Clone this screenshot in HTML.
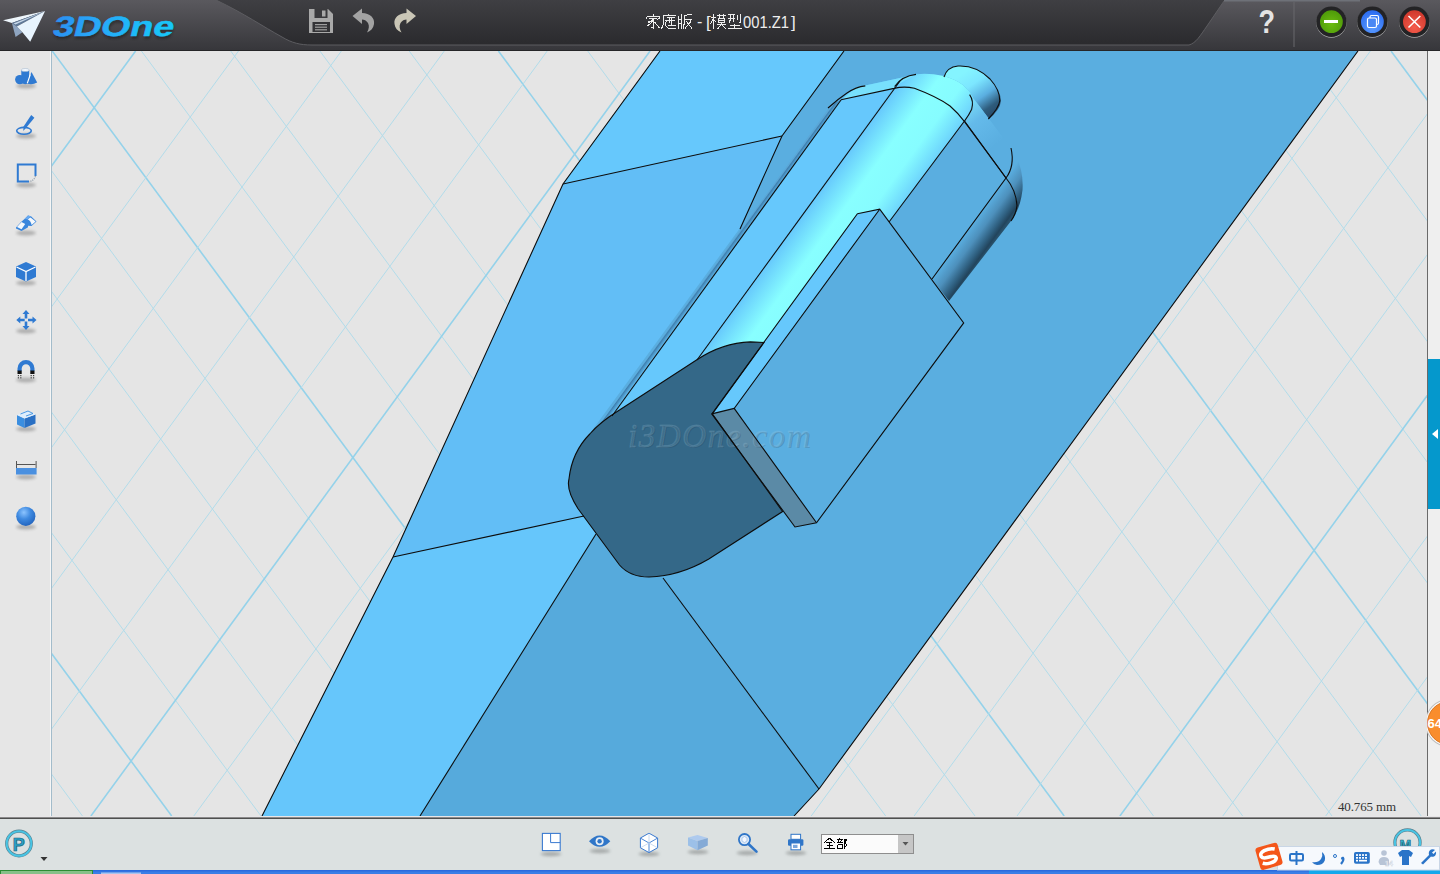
<!DOCTYPE html>
<html><head><meta charset="utf-8">
<style>
html,body{margin:0;padding:0;width:1440px;height:874px;overflow:hidden;background:#dce1e1;font-family:"Liberation Sans",sans-serif;}
svg{position:absolute;left:0;top:0;display:block;}
</style></head><body>
<svg width="1440" height="874" viewBox="0 0 1440 874">
<defs>
<clipPath id="vp"><rect x="52" y="51" width="1375" height="765"/></clipPath>
<linearGradient id="gEdge" gradientUnits="userSpaceOnUse" x1="660.8" y1="340" x2="664.9" y2="343"><stop offset="0" stop-color="#5aa6d6"/><stop offset="0.2" stop-color="#3f80b0"/><stop offset="1" stop-color="#64c0f4"/></linearGradient>
<linearGradient id="gCyl" gradientUnits="userSpaceOnUse" x1="791" y1="230" x2="852.3" y2="274.7"><stop offset="0" stop-color="#66c8fc"/><stop offset="0.4" stop-color="#88ffff"/><stop offset="0.7" stop-color="#86fcff"/><stop offset="1" stop-color="#6cd2fc"/></linearGradient>
<linearGradient id="gCap" gradientUnits="userSpaceOnUse" x1="966" y1="96" x2="1002" y2="140"><stop offset="0" stop-color="#80e8fc"/><stop offset="0.45" stop-color="#64baea"/><stop offset="1" stop-color="#5aaee0"/></linearGradient>
<linearGradient id="gRnd" gradientUnits="userSpaceOnUse" x1="953" y1="250" x2="975.7" y2="266.6"><stop offset="0" stop-color="#5aaee0"/><stop offset="0.4" stop-color="#4d90bc"/><stop offset="0.75" stop-color="#2e5e7e"/><stop offset="0.92" stop-color="#22445c"/><stop offset="1" stop-color="#28506a"/></linearGradient>
<linearGradient id="gNub" gradientUnits="userSpaceOnUse" x1="962" y1="74" x2="990" y2="114"><stop offset="0" stop-color="#84f4ff"/><stop offset="0.3" stop-color="#7ce6ff"/><stop offset="0.62" stop-color="#5aaee0"/><stop offset="0.88" stop-color="#2e5c7c"/><stop offset="1" stop-color="#2a5070"/></linearGradient>
</defs>
<rect x="52" y="51" width="1375" height="765" fill="#e5e5e5"/>
<g clip-path="url(#vp)" id="grid">
<line x1="-1018.8" y1="51" x2="-453.0" y2="816" stroke="#b2dcea" stroke-width="1"/>
<line x1="-929.5" y1="51" x2="-363.8" y2="816" stroke="#b2dcea" stroke-width="1"/>
<line x1="-840.3" y1="51" x2="-274.5" y2="816" stroke="#94d2ea" stroke-width="1.6"/>
<line x1="-751.0" y1="51" x2="-185.3" y2="816" stroke="#b2dcea" stroke-width="1"/>
<line x1="-661.8" y1="51" x2="-96.0" y2="816" stroke="#b2dcea" stroke-width="1"/>
<line x1="-572.5" y1="51" x2="-6.8" y2="816" stroke="#b2dcea" stroke-width="1"/>
<line x1="-483.3" y1="51" x2="82.5" y2="816" stroke="#b2dcea" stroke-width="1"/>
<line x1="-394.1" y1="51" x2="171.7" y2="816" stroke="#94d2ea" stroke-width="1.6"/>
<line x1="-304.8" y1="51" x2="261.0" y2="816" stroke="#b2dcea" stroke-width="1"/>
<line x1="-215.6" y1="51" x2="350.2" y2="816" stroke="#b2dcea" stroke-width="1"/>
<line x1="-126.3" y1="51" x2="439.5" y2="816" stroke="#b2dcea" stroke-width="1"/>
<line x1="-37.0" y1="51" x2="528.7" y2="816" stroke="#b2dcea" stroke-width="1"/>
<line x1="52.2" y1="51" x2="618.0" y2="816" stroke="#94d2ea" stroke-width="1.6"/>
<line x1="141.4" y1="51" x2="707.2" y2="816" stroke="#b2dcea" stroke-width="1"/>
<line x1="230.7" y1="51" x2="796.5" y2="816" stroke="#b2dcea" stroke-width="1"/>
<line x1="319.9" y1="51" x2="885.7" y2="816" stroke="#b2dcea" stroke-width="1"/>
<line x1="409.2" y1="51" x2="975.0" y2="816" stroke="#b2dcea" stroke-width="1"/>
<line x1="498.4" y1="51" x2="1064.2" y2="816" stroke="#94d2ea" stroke-width="1.6"/>
<line x1="587.7" y1="51" x2="1153.5" y2="816" stroke="#b2dcea" stroke-width="1"/>
<line x1="677.0" y1="51" x2="1242.7" y2="816" stroke="#b2dcea" stroke-width="1"/>
<line x1="766.2" y1="51" x2="1332.0" y2="816" stroke="#b2dcea" stroke-width="1"/>
<line x1="855.5" y1="51" x2="1421.2" y2="816" stroke="#b2dcea" stroke-width="1"/>
<line x1="944.7" y1="51" x2="1510.5" y2="816" stroke="#94d2ea" stroke-width="1.6"/>
<line x1="1034.0" y1="51" x2="1599.7" y2="816" stroke="#b2dcea" stroke-width="1"/>
<line x1="1123.2" y1="51" x2="1689.0" y2="816" stroke="#b2dcea" stroke-width="1"/>
<line x1="1212.5" y1="51" x2="1778.2" y2="816" stroke="#b2dcea" stroke-width="1"/>
<line x1="1301.7" y1="51" x2="1867.5" y2="816" stroke="#b2dcea" stroke-width="1"/>
<line x1="1391.0" y1="51" x2="1956.7" y2="816" stroke="#94d2ea" stroke-width="1.6"/>
<line x1="1480.2" y1="51" x2="2046.0" y2="816" stroke="#b2dcea" stroke-width="1"/>
<line x1="1569.5" y1="51" x2="2135.2" y2="816" stroke="#b2dcea" stroke-width="1"/>
<line x1="-276.0" y1="51" x2="-835.2" y2="816" stroke="#b2dcea" stroke-width="1"/>
<line x1="-173.1" y1="51" x2="-732.3" y2="816" stroke="#b2dcea" stroke-width="1"/>
<line x1="-70.2" y1="51" x2="-629.4" y2="816" stroke="#b2dcea" stroke-width="1"/>
<line x1="32.7" y1="51" x2="-526.5" y2="816" stroke="#b2dcea" stroke-width="1"/>
<line x1="135.6" y1="51" x2="-423.6" y2="816" stroke="#94d2ea" stroke-width="1.6"/>
<line x1="238.5" y1="51" x2="-320.7" y2="816" stroke="#b2dcea" stroke-width="1"/>
<line x1="341.4" y1="51" x2="-217.8" y2="816" stroke="#b2dcea" stroke-width="1"/>
<line x1="444.3" y1="51" x2="-114.9" y2="816" stroke="#b2dcea" stroke-width="1"/>
<line x1="547.2" y1="51" x2="-12.0" y2="816" stroke="#b2dcea" stroke-width="1"/>
<line x1="650.1" y1="51" x2="90.9" y2="816" stroke="#94d2ea" stroke-width="1.6"/>
<line x1="753.0" y1="51" x2="193.8" y2="816" stroke="#b2dcea" stroke-width="1"/>
<line x1="855.9" y1="51" x2="296.7" y2="816" stroke="#b2dcea" stroke-width="1"/>
<line x1="958.8" y1="51" x2="399.6" y2="816" stroke="#b2dcea" stroke-width="1"/>
<line x1="1061.7" y1="51" x2="502.5" y2="816" stroke="#b2dcea" stroke-width="1"/>
<line x1="1164.6" y1="51" x2="605.4" y2="816" stroke="#94d2ea" stroke-width="1.6"/>
<line x1="1267.5" y1="51" x2="708.3" y2="816" stroke="#b2dcea" stroke-width="1"/>
<line x1="1370.4" y1="51" x2="811.2" y2="816" stroke="#b2dcea" stroke-width="1"/>
<line x1="1473.3" y1="51" x2="914.1" y2="816" stroke="#b2dcea" stroke-width="1"/>
<line x1="1576.2" y1="51" x2="1017.0" y2="816" stroke="#b2dcea" stroke-width="1"/>
<line x1="1679.1" y1="51" x2="1119.9" y2="816" stroke="#94d2ea" stroke-width="1.6"/>
<line x1="1782.0" y1="51" x2="1222.8" y2="816" stroke="#b2dcea" stroke-width="1"/>
<line x1="1884.9" y1="51" x2="1325.7" y2="816" stroke="#b2dcea" stroke-width="1"/>
<line x1="1987.8" y1="51" x2="1428.6" y2="816" stroke="#b2dcea" stroke-width="1"/>
<line x1="2090.7" y1="51" x2="1531.5" y2="816" stroke="#b2dcea" stroke-width="1"/>
<line x1="2193.6" y1="51" x2="1634.4" y2="816" stroke="#94d2ea" stroke-width="1.6"/>
<line x1="2296.5" y1="51" x2="1737.3" y2="816" stroke="#b2dcea" stroke-width="1"/>
</g>
<g clip-path="url(#vp)" id="model">
<polygon points="262,816 393,557 563,184 660,51 1358,51 819,789 794,816" fill="#5aaee0"/>
<polygon points="563,184 660,51 844,51 782,136" fill="#66c8fc"/>
<polygon points="563,184 782,136 740,229 593,434 575,470 578,508 584,516 393,557" fill="#62bef6"/>
<polygon points="393,557 584,516 596,534 420,816 262,816" fill="#66c6fb"/>
<polygon points="420,816 596,534 663,578 819,789 794,816" fill="#56aadc"/>
<path d="M944,77 Q947,67 958,66 Q976,65 990,79 Q1001,91 1001,101 Q1000,110 988,120 L960,100 Z" fill="url(#gNub)"/>
<path d="M588,436 L830,105 Q842,92 856,87 L900,77.7 L916.5,73.8 Q930,73 942.5,75.8 Q955,79 963.3,85.2 Q970,91 973.8,98.8 L1011,148 Q1024,166 1022.5,190 Q1020,210 1011,221 L949,301 L932,279 Z" fill="#5aaee0"/>
<polygon points="591.206,436 831.8064,104 841.0052000000001,100 597.506,436" fill="url(#gEdge)"/>
<path d="M597.5,436 L841.0,100 Q850,90 856,87.5 L900,78 L916.5,73.8 L894.6,86.5 L697,360 Z" fill="#66c8fc"/>
<path d="M697,360 L894.6,86.5 Q902,76 916.5,74.2 Q930,73 942.5,75.8 Q955,79 963.3,85.2 Q975,96 972.7,101 Q971,112 964.5,121 L889,222 L879.7,209.2 L857.4,213.7 L764,342.5 L750,342 Q722,344 697,360 Z" fill="url(#gCyl)"/>
<path d="M842,99.5 L856,87.5 L900,78 L916.5,74 L894.6,86.5 L894,88.4 Z" fill="#78e0fc"/>
<path d="M964.5,121 Q971,112 972.7,101 Q972,96 969.6,94.6 L973.8,98.8 L1011,148 Q1016,165 1006,178 Z" fill="url(#gCap)"/>
<path d="M1006,178 Q1016,165 1011,148 Q1024,166 1022.5,190 Q1020,210 1011,221 L949,301 L932,279 Z" fill="url(#gRnd)"/>
<polygon points="857.4,213.7 879.7,209.2 734.2,408.4 711.8,413.7" fill="#66c8fc"/>
<polygon points="879.7,209.2 963.7,322.9 816.5,522.8 734.2,408.4" fill="#5aaee0"/>
<polygon points="711.8,413.9 734.2,408.4 816.5,522.8 795,527" fill="#5b8aa6"/>
<path d="M764,342.5 L712.3,413.9 L782.6,511.5 L708.8,559 Q680,576 649,577 Q630,577 619.5,565 L577.9,508.5 Q566,490 569,478.8 Q572,452 589.8,434 Q600,422 619.5,410 L696.9,359.8 Q722,343 750.4,341.9 Z" fill="#346888"/>
<text x="628" y="446.5" font-family="Liberation Serif" font-style="italic" font-size="33" letter-spacing="1.6" fill="#1e4058" fill-opacity="0.22" transform="translate(1.2,1.2)">i3DOne.com</text>
<text x="628" y="446.5" font-family="Liberation Serif" font-style="italic" font-size="33" letter-spacing="1.6" fill="#b0d0e0" fill-opacity="0.13" stroke="#a8c8da" stroke-opacity="0.18" stroke-width="1">i3DOne.com</text>
<polyline points="262,816 393,557 563,184 660,51" fill="none" stroke="#0d0d0d" stroke-width="1.1"/>
<polyline points="1358,51 819,789 794,816" fill="none" stroke="#0d0d0d" stroke-width="1.1"/>
<polyline points="844,51 782,136 740,229" fill="none" stroke="#0d0d0d" stroke-width="1.1"/>
<polyline points="563,184 782,136" fill="none" stroke="#0d0d0d" stroke-width="1.1"/>
<polyline points="393,557 584,516" fill="none" stroke="#0d0d0d" stroke-width="1.1"/>
<polyline points="596,534 420,816" fill="none" stroke="#0d0d0d" stroke-width="1.1"/>
<polyline points="663,578 819,789" fill="none" stroke="#0d0d0d" stroke-width="1.1"/>
<polyline points="612,416 841,100" fill="none" stroke="#0d0d0d" stroke-width="1.1"/>
<polyline points="697,360 900,81" fill="none" stroke="#0d0d0d" stroke-width="1.1"/>
<polyline points="964.5,121 889,222" fill="none" stroke="#0d0d0d" stroke-width="1.1"/>
<polyline points="964.5,121 1006,178 932,279" fill="none" stroke="#0d0d0d" stroke-width="1.1"/>
<polyline points="857.4,213.7 879.7,209.2 963.7,322.9 816.5,522.8 795,527 711.8,413.9 857.4,213.7" fill="none" stroke="#0d0d0d" stroke-width="1.1"/>
<polyline points="879.7,209.2 734.2,408.4 816.5,522.8" fill="none" stroke="#0d0d0d" stroke-width="1.1"/>
<polyline points="711.8,413.9 734.2,408.4" fill="none" stroke="#0d0d0d" stroke-width="1.1"/>
<path d="M764,342.5 L712.3,413.9 L782.6,511.5 L708.8,559 Q680,576 649,577 Q630,577 619.5,565 L577.9,508.5 Q566,490 569,478.8 Q572,452 589.8,434 Q600,422 619.5,410 L696.9,359.8 Q722,343 750.4,341.9 Z" fill="none" stroke="#0d0d0d" stroke-width="1.1"/>
<path d="M828,108 Q838,99 847,93 Q856,87 865.3,85.9" fill="none" stroke="#0d0d0d" stroke-width="1.1"/>
<path d="M841,99.7 L894,88.4 Q904,86 914.4,88.3 Q937,96.7 950,106 Q958,113 964.3,121.3 L1006,178" fill="none" stroke="#0d0d0d" stroke-width="1.1"/>
<path d="M894.6,86.5 Q902,76 916,74.4" fill="none" stroke="#0d0d0d" stroke-width="1.1"/>
<path d="M969.6,94.6 Q974,101 971.7,109.2 Q969,115 964.3,121.3" fill="none" stroke="#0d0d0d" stroke-width="1.1"/>
<path d="M944,77 Q947,67 958,66 Q976,65 990,79 Q1000,90 999.8,100.8 Q999,108 988.3,119" fill="none" stroke="#0d0d0d" stroke-width="1.1"/>
<path d="M1006,178 Q1015,166 1011,148" fill="none" stroke="#0d0d0d" stroke-width="1.1"/>
<path d="M1006,178 Q1016,190 1017,205.6 Q1016,214 1011,221" fill="none" stroke="#0d0d0d" stroke-width="1.1"/>
</g>
<!-- TITLE BAR -->
<defs>
<linearGradient id="tbOuter" x1="0" y1="0" x2="0" y2="1"><stop offset="0" stop-color="#5a595e"/><stop offset="1" stop-color="#36363a"/></linearGradient>
<linearGradient id="tbInner" x1="0" y1="0" x2="0" y2="1"><stop offset="0" stop-color="#3f3f43"/><stop offset="1" stop-color="#2a2a2d"/></linearGradient>
<linearGradient id="logoG" gradientUnits="userSpaceOnUse" x1="53" y1="0" x2="175" y2="0"><stop offset="0" stop-color="#2a8cf0"/><stop offset="0.4" stop-color="#28a8f8"/><stop offset="0.7" stop-color="#1eb8f8"/><stop offset="1" stop-color="#18c6f8"/></linearGradient>
<radialGradient id="btnG" cx="0.5" cy="0.6" r="0.6"><stop offset="0" stop-color="#6cbc10"/><stop offset="1" stop-color="#4e9a0a"/></radialGradient>
<radialGradient id="btnB" cx="0.5" cy="0.75" r="0.7"><stop offset="0" stop-color="#5c9cff"/><stop offset="1" stop-color="#2e6ef0"/></radialGradient>
<radialGradient id="btnR" cx="0.5" cy="0.75" r="0.7"><stop offset="0" stop-color="#f45c4c"/><stop offset="1" stop-color="#d23a2e"/></radialGradient>
</defs>
<rect x="0" y="0" width="1440" height="51" fill="url(#tbOuter)"/>
<path d="M216,0 C245,14 262,26 282,37 C292,43 300,45 312,45 L1189,45 C1196,43 1200,36 1207,26 L1224,1 L1224,0 Z" fill="url(#tbInner)"/>
<path d="M216,0 C245,14 262,26 282,37 C292,43 300,45 312,45 L1189,45 C1196,43 1200,36 1207,26 L1224,1" fill="none" stroke="#5c5c60" stroke-width="1"/>
<rect x="1224" y="0" width="136" height="1.5" fill="#6e7178"/>
<rect x="0" y="50" width="1440" height="1" fill="#262628"/>
<line x1="1294" y1="2" x2="1294" y2="47" stroke="#68686c" stroke-width="1"/>
<!-- paper plane -->
<polygon points="3,20.2 45.1,11 11.9,22.9" fill="#eef6fc"/>
<polygon points="11.9,22.9 45.1,11 16.9,26.4" fill="#5f7898"/>
<polygon points="13.5,23.4 45.1,11 15.5,24.6" fill="#c8d8e8"/>
<polygon points="11.9,22.9 16.9,26.4 22.4,32.3 15.6,36.9" fill="#8ea4c0"/>
<polygon points="16.9,26.4 45.1,11 30.2,41.7 22.4,32.3" fill="#e8f4fe"/>
<!-- 3DOne -->
<filter id="lshadow" x="-10%" y="-30%" width="120%" height="160%"><feGaussianBlur stdDeviation="1.2"/></filter>
<text x="61.5" y="38.5" transform="skewX(-14)" font-family="Liberation Sans" font-weight="bold" font-size="28" textLength="121" lengthAdjust="spacingAndGlyphs" fill="#1a1a1c" opacity="0.55" filter="url(#lshadow)">3DOne</text>
<text x="60.5" y="36.5" transform="skewX(-14)" font-family="Liberation Sans" font-weight="bold" font-size="28" textLength="121" lengthAdjust="spacingAndGlyphs" fill="url(#logoG)" stroke="url(#logoG)" stroke-width="0.5">3DOne</text>
<!-- save icon -->
<path d="M309,9 L328,9 L333,14 L333,33 L309,33 Z" fill="#a9a9a9"/>
<rect x="314.5" y="9" width="13" height="9" fill="#3a3a3d"/>
<rect x="322" y="10.5" width="3.5" height="6" fill="#a9a9a9"/>
<rect x="312.5" y="22" width="17.5" height="10" fill="#333336"/>
<rect x="315" y="24" width="12" height="1.2" fill="#a0a0a0"/>
<rect x="315" y="26.6" width="12" height="1.2" fill="#a0a0a0"/>
<rect x="315" y="29.2" width="12" height="1.2" fill="#a0a0a0"/>
<!-- undo -->
<path d="M352.5,16 L362,8.5 L362,13 C370,13 375,18 374,24 C373.5,28 371,31 367,32.5 C369,29 369.5,26 368,23 C366.5,20.5 364,19.5 362,19.5 L362,24 Z" fill="#a3a3a3"/>
<!-- redo -->
<path d="M416,16 L406.5,8.5 L406.5,13 C398.5,13 393.5,18 394.5,24 C395,28 397.5,31 401.5,32.5 C399.5,29 399,26 400.5,23 C402,20.5 404.5,19.5 406.5,19.5 L406.5,24 Z" fill="#cac6b6"/>
<!-- title -->
<g id="titletext" fill="none" stroke="#eeeeee" stroke-width="1" shape-rendering="crispEdges">
<!-- 家 -->
<path d="M653,13.5 v2 M646.5,16.5 h13 M646.5,16.5 v2 M659.5,16.5 v2 M649,18.5 h8 M654,19 l-6,4 M648,21.5 h5 M653,20 l0.5,8 l-2,-1 M647,26 l5,-3.5 M654.5,22 l5,6 M657,20 l2.5,-2"/>
<!-- 庭 -->
<path d="M668.5,13.5 v2 M662.5,15.5 h13 M663.5,15.5 v8 l-2,5.5 M667,17.5 h8 M669,18 v5 M667,20.5 h8 M671,18 v8 M668,25.5 h7.5 M665,20 l1.5,1 l-1.5,4 l3,3 l8,0.5"/>
<!-- 版 -->
<path d="M678.5,15.5 v13 M681.5,13.5 v15.5 M678.5,19.5 h3 M678.5,23.5 h3 M684,15.5 l8,-1.5 M684.5,15.5 v7 l-1.5,6 M684.5,19.5 h6.5 l-1,3 l-5,6 M686,21 l6,7.5"/>
</g>
<text x="697" y="27" font-family="Liberation Sans" font-size="16" fill="#eeeeee">-</text>
<text x="706" y="28" font-family="Liberation Sans" font-size="17" fill="#eeeeee">[</text>
<g fill="none" stroke="#eeeeee" stroke-width="1" shape-rendering="crispEdges">
<!-- 模 -->
<path d="M713.5,13.5 v15.5 M711,17.5 h5 M713,19 l-2.5,5 M714,20 l2,2 M717,15.5 h9 M719.5,13.5 v4 M723.5,13.5 v4 M718.5,18.5 h6 v4 h-6 z M718.5,20.5 h6 M717,24.5 h9 M721.5,22.5 v2 l-4,4.5 M722,25 l4,4"/>
<!-- 型 -->
<path d="M728,14.5 h7 M728,18.5 h7 M730.5,14.5 v5 l-1.5,3 M733.5,14.5 v7 M737.5,15 v5 M740.5,13.5 v9 l-1,-0.5 M734.5,23.5 v4 M729.5,25.5 h10 M728,28.5 h13.5"/>
</g>
<text x="743" y="28" font-family="Liberation Sans" font-size="17" textLength="46" lengthAdjust="spacingAndGlyphs" fill="#eeeeee">001.Z1</text>
<text x="791" y="28" font-family="Liberation Sans" font-size="17" fill="#eeeeee">]</text>
<!-- help -->
<text x="1258.5" y="32.5" font-family="Liberation Sans" font-weight="bold" font-size="33" textLength="16.5" lengthAdjust="spacingAndGlyphs" fill="#e4e4e4">?</text>
<!-- window buttons -->
<g>
<circle cx="1331.4" cy="22.6" r="15.2" fill="#c8c8c8" opacity="0.8"/>
<circle cx="1331.4" cy="21.7" r="15.2" fill="#232325"/>
<circle cx="1331.4" cy="21.7" r="11.4" fill="url(#btnG)"/>
<rect x="1324" y="20" width="14" height="3" fill="#ffffff"/>
<circle cx="1372.4" cy="22.6" r="15.2" fill="#c8c8c8" opacity="0.8"/>
<circle cx="1372.4" cy="21.7" r="15.2" fill="#232325"/>
<circle cx="1372.4" cy="21.7" r="11.4" fill="url(#btnB)"/>
<rect x="1370" y="15.5" width="8.5" height="9" rx="1.5" fill="none" stroke="#ffffff" stroke-width="1.2"/>
<rect x="1367.5" y="18" width="9" height="9.5" rx="1.5" fill="#4a88f4" stroke="#ffffff" stroke-width="1.2"/>
<circle cx="1414.4" cy="22.6" r="15.2" fill="#c8c8c8" opacity="0.8"/>
<circle cx="1414.4" cy="21.7" r="15.2" fill="#232325"/>
<circle cx="1414.4" cy="21.7" r="11.4" fill="url(#btnR)"/>
<path d="M1408.5,16 L1420.3,27.5 M1420.3,16 L1408.5,27.5" stroke="#ffffff" stroke-width="1.6"/>
</g>
<!-- LEFT TOOLBAR -->
<defs>
<filter id="blur2" x="-50%" y="-100%" width="200%" height="300%"><feGaussianBlur stdDeviation="1.6"/></filter>
<radialGradient id="sphG" cx="0.4" cy="0.3" r="0.7"><stop offset="0" stop-color="#8cc4ff"/><stop offset="0.5" stop-color="#3f8ae0"/><stop offset="1" stop-color="#2466c0"/></radialGradient>
</defs>
<rect x="0" y="51" width="51" height="766" fill="#e6e6e6"/>
<rect x="51" y="51" width="1" height="766" fill="#a3bccb"/>
<rect x="50" y="51" width="1" height="766" fill="#f6f6f6"/>
<g fill="#a9a9a9" filter="url(#blur2)" opacity="0.9">
<ellipse cx="26" cy="86" rx="10" ry="2.5"/>
<ellipse cx="26" cy="136" rx="10" ry="2.5"/>
<ellipse cx="26" cy="185" rx="10" ry="2.5"/>
<ellipse cx="26" cy="233" rx="10" ry="2.5"/>
<ellipse cx="26" cy="283" rx="10" ry="2.5"/>
<ellipse cx="26" cy="331" rx="10" ry="2.5"/>
<ellipse cx="26" cy="380" rx="10" ry="2.5"/>
<ellipse cx="26" cy="429" rx="10" ry="2.5"/>
<ellipse cx="26" cy="477" rx="10" ry="2.5"/>
<ellipse cx="26" cy="527" rx="10" ry="2.5"/>
</g>
<g fill="#2f7ad2">
<!-- 1 shapes -->
<circle cx="19.8" cy="79.6" r="4.7"/>
<path d="M21.3,70 L29.2,70 L29.2,83 Q25.2,85.3 21.3,83 Z"/>
<ellipse cx="25.25" cy="70" rx="3.95" ry="1.5" fill="#f4f9ff" stroke="#9ab0c8" stroke-width="0.5"/>
<path d="M31.5,72 L37.2,82.5 Q32,85.5 27,83.5 Z"/>
<path d="M30.3,74.5 L27.3,83.3" stroke="#ffffff" stroke-width="1.1"/>
<!-- 2 pencil -->
<ellipse cx="24" cy="130.8" rx="7.3" ry="3.4" fill="none" stroke="#2f7ad2" stroke-width="1.6"/>
<polygon points="31.2,115 34.4,117.8 26,128 23.2,131 23.6,126.5"/>
<!-- 3 square curl -->
<path d="M35.5,176 L35.5,164.6 L17.8,164.6 L17.8,181.5 L29,181.5" fill="none" stroke="#2f7ad2" stroke-width="2"/>
<path d="M35.5,176 Q34,181 29,181.5" fill="none" stroke="#9aa6b2" stroke-width="1.2" stroke-dasharray="1.2,1"/>
<!-- 4 twisted sheet -->
<polygon points="16,227.5 21,222 24.5,219 28,215.5 31,216.2 36.5,221.5 31.5,226 28.2,225.8 27.8,227.5 21.5,231 16,228.6" fill="#3a86dc"/>
<polygon points="17,227 21.5,222 25.2,224 21.5,229.2" fill="#f4f8fc"/>
<path d="M27.6,219.2 L30.5,217.4 L35.6,221.6 L31.6,224.9 Q31,221 27.6,219.2 Z" fill="#f4f8fc"/>
<polygon points="24.5,219 28,215.5 31,216.2 27.6,219.2" fill="#6aaaf0"/>
<!-- 5 cube -->
<polygon points="26,262 36,266.5 36,277 26,281.5 16,277 16,266.5"/>
<path d="M16.5,267 L26,271.5 L35.5,267 M26,271.5 L26,281" fill="none" stroke="#ffffff" stroke-width="1.3"/>
<!-- 6 move arrows -->
<path d="M26,310 L29.5,314 L27.3,314 L27.3,318.5 L24.7,318.5 L24.7,314 L22.5,314 Z"/>
<path d="M26,330 L29.5,326 L27.3,326 L27.3,321.5 L24.7,321.5 L24.7,326 L22.5,326 Z"/>
<path d="M16.3,320 L20.3,316.5 L20.3,318.7 L24.7,318.7 L24.7,321.3 L20.3,321.3 L20.3,323.5 Z"/>
<path d="M36.5,320 L32.5,316.5 L32.5,318.7 L28,318.7 L28,321.3 L32.5,321.3 L32.5,323.5 Z"/>
<!-- 7 magnet -->
<path d="M17.5,371 L17.5,368.5 A8.5,8.5 0 0 1 34.5,368.5 L34.5,371 L30.3,371 L30.3,368.5 A4.3,4.3 0 0 0 21.7,368.5 L21.7,371 Z"/>
<rect x="17.5" y="370.5" width="4.2" height="3.5" fill="#111111"/>
<rect x="30.3" y="370.5" width="4.2" height="3.5" fill="#111111"/>
<g fill="#444444"><rect x="17.8" y="375" width="1.2" height="1.2"/><rect x="20.2" y="375" width="1.2" height="1.2"/><rect x="17.8" y="377.2" width="1.2" height="1.2"/><rect x="20.2" y="377.2" width="1.2" height="1.2"/><rect x="30.6" y="375" width="1.2" height="1.2"/><rect x="33" y="375" width="1.2" height="1.2"/><rect x="30.6" y="377.2" width="1.2" height="1.2"/><rect x="33" y="377.2" width="1.2" height="1.2"/></g>
<!-- 8 box -->
<polygon points="17,415 24.5,418.5 24.5,428 17,424.5" fill="#3a8ee0"/>
<polygon points="24.5,418.5 35.5,414.5 35.5,423.5 24.5,428" fill="#2a70c4"/>
<polygon points="17,415 27,410.5 35.5,414.5 24.5,418.5" fill="#dfeefc"/>
<path d="M20.5,414 L28,411 L33,413.5 L26,416" fill="none" stroke="#3a8ee0" stroke-width="0.9"/>
<!-- 9 ruler -->
<rect x="16" y="468" width="20.6" height="6.5" fill="#4a90e0"/>
<rect x="16" y="461" width="1" height="7" fill="#555555"/>
<rect x="35.6" y="461" width="1" height="7" fill="#555555"/>
<rect x="17" y="464" width="18.6" height="1" fill="#555555"/>
<!-- 10 sphere -->
<circle cx="25.8" cy="516.3" r="9.6" fill="url(#sphG)"/>
</g>
<!-- RIGHT STRIP -->
<rect x="1427" y="51" width="1" height="766" fill="#6a6a6a"/>
<rect x="1428" y="51" width="12" height="766" fill="#efefef"/>
<rect x="1428" y="359" width="12" height="150" fill="#0598cc"/>
<polygon points="1432,434 1438,429 1438,439" fill="#ffffff"/>
<clipPath id="rclip"><rect x="1427" y="690" width="13" height="70"/></clipPath>
<g clip-path="url(#rclip)">
<circle cx="1449" cy="723" r="24" fill="#bdbdbd"/>
<circle cx="1449" cy="723" r="23" fill="#fafafa"/>
<circle cx="1449" cy="723" r="21.5" fill="#f98d2d" stroke="#d2670e" stroke-width="0.8"/>
<text x="1427.5" y="728" font-family="Liberation Sans" font-weight="bold" font-size="13" fill="#ffffff">64</text>
</g>
<!-- BOTTOM BAR -->
<defs>
<filter id="blur3" x="-50%" y="-100%" width="200%" height="300%"><feGaussianBlur stdDeviation="1.8"/></filter>
<linearGradient id="taskG" x1="0" y1="0" x2="0" y2="1"><stop offset="0" stop-color="#3a7ae6"/><stop offset="1" stop-color="#2a66d8"/></linearGradient>
<radialGradient id="pG" cx="0.45" cy="0.4" r="0.6"><stop offset="0" stop-color="#e8f4f8"/><stop offset="1" stop-color="#c8dde6"/></radialGradient>
</defs>
<rect x="0" y="816" width="1440" height="1" fill="#e8e6e8"/>
<rect x="0" y="817" width="1440" height="1" fill="#8a8a8a"/>
<rect x="0" y="818" width="1440" height="1" fill="#4f4f4f"/>
<rect x="0" y="819" width="1440" height="51" fill="#dce1e1"/>
<!-- P icon -->
<circle cx="19" cy="843.5" r="12.3" fill="none" stroke="#3a6878" stroke-width="3.2" opacity="0.8"/>
<circle cx="19" cy="843.5" r="12.3" fill="none" stroke="#48c4e4" stroke-width="2"/>
<text x="12.8" y="850.5" font-family="Liberation Sans" font-weight="bold" font-size="18" fill="#2aa4c8" stroke="#16607a" stroke-width="0.7">P</text>
<polygon points="40.5,857 47.5,857 44,861" fill="#333333"/>
<!-- shadows -->
<g fill="#9ea2a2" filter="url(#blur3)" opacity="0.85">
<ellipse cx="551" cy="854" rx="10.5" ry="2.2"/>
<ellipse cx="600" cy="851" rx="10.5" ry="2.2"/>
<ellipse cx="649" cy="854" rx="10.5" ry="2.2"/>
<ellipse cx="698" cy="852" rx="10.5" ry="2.2"/>
<ellipse cx="747" cy="853" rx="10.5" ry="2.2"/>
<ellipse cx="796" cy="853" rx="10.5" ry="2.2"/>
</g>
<!-- icon A -->
<rect x="542.4" y="833.4" width="17.8" height="17.2" fill="#ffffff" stroke="#3a7ad0" stroke-width="1.1"/>
<path d="M550.6,833.4 V842.6 H560.2" fill="none" stroke="#3a7ad0" stroke-width="1"/>
<!-- icon B eye -->
<path d="M589,841.2 Q599.6,830 610.3,841.2 Q599.6,852.4 589,841.2 Z" fill="#3076c8"/>
<circle cx="599.6" cy="841.2" r="4" fill="#e8eef4"/>
<circle cx="599.6" cy="841.2" r="2.2" fill="#3076c8"/>
<!-- icon C wire cube -->
<polygon points="649,833.2 657.6,838 657.6,847.8 649,852.6 640.4,847.8 640.4,838" fill="#ffffff" stroke="#3a7ad0" stroke-width="1"/>
<path d="M640.6,838.2 L649,843 L657.4,838.2 M649,843 V852.4" fill="none" stroke="#4a86d6" stroke-width="1"/>
<path d="M649,833.5 V843 M641,847.5 L649,843 L657,847.5" fill="none" stroke="#bcd2ee" stroke-width="0.8"/>
<!-- icon D solid box -->
<polygon points="688,837.5 697.5,835 707.8,838 697.5,841" fill="#aecaee"/>
<polygon points="688,837.5 697.5,841 697.5,850.2 688,845.5" fill="#9cc0e8"/>
<polygon points="697.5,841 707.8,838 707.8,845.5 697.5,850.2" fill="#84aad6"/>
<!-- icon E magnifier -->
<circle cx="744.5" cy="839.6" r="5.6" fill="#dce8f6" stroke="#3076c8" stroke-width="1.8"/>
<path d="M744.5,836.5 L747,838 L747,841 L744.5,842.6 L742,841 L742,838 Z" fill="#f4f8ff" stroke="#8ab4e4" stroke-width="0.6"/>
<path d="M748.5,844 L756.5,851.6" stroke="#3076c8" stroke-width="2.6" stroke-linecap="round"/>
<!-- icon F printer -->
<rect x="791" y="834.3" width="9.6" height="5" fill="#ffffff" stroke="#3076c8" stroke-width="1"/>
<rect x="788" y="839.2" width="15.4" height="6.5" rx="1.2" fill="#3076c8"/>
<rect x="791" y="843" width="9.6" height="6.8" fill="#ffffff" stroke="#3076c8" stroke-width="1"/>
<rect x="793" y="844.8" width="4.5" height="3.2" fill="#7aa6dc"/>
<!-- combobox -->
<rect x="821.5" y="834.5" width="92" height="19" fill="#fbfbfb" stroke="#8e8e8e" stroke-width="1"/>
<rect x="898" y="835" width="15" height="18" fill="#c6c6c6"/>
<polygon points="902.5,842 908.5,842 905.5,845.5" fill="#555555"/>
<g fill="none" stroke="#000000" stroke-width="1" shape-rendering="crispEdges">
<path d="M829.5,838 L824,843 M829.5,838 L835,843 M826,842.5 h6 M826.5,845.5 h6 M824,848.5 h11 M829.5,842.5 v6"/>
<path d="M839.5,837.5 v1.5 M836.5,839.5 h6.5 M838,840.5 l1,1.5 M841.5,840.5 l-1,1.5 M836.5,842.5 h6.5 M837.5,844.5 h4.5 v4.5 M837.5,844.5 v4.5 M837.5,848.5 h4.5 M844,839.5 v9.5 M844,839.5 h2.5 l-1.5,3 l1.5,2.5 l-1,2"/>
</g>
<!-- measure text -->
<text x="1338" y="811" font-family="Liberation Serif" font-size="13" textLength="58" lengthAdjust="spacing" fill="#333333">40.765 mm</text>
<!-- M icon -->
<circle cx="1407.5" cy="842.5" r="12.6" fill="none" stroke="#3a6878" stroke-width="3.2" opacity="0.8"/>
<circle cx="1407.5" cy="842.5" r="12.6" fill="none" stroke="#48c4e4" stroke-width="2"/>
<text x="1399.5" y="849.5" font-family="Liberation Sans" font-weight="bold" font-size="14" fill="#38b8d8" stroke="#1c6478" stroke-width="0.7">M</text>
<!-- taskbar -->
<rect x="0" y="870" width="1440" height="4" fill="#2a6ade"/>
<rect x="0" y="871.5" width="1440" height="2.5" fill="#3a7ee6"/>
<rect x="101" y="872.5" width="40" height="1.5" fill="#a8c4ee"/>
<rect x="0" y="870" width="93" height="4" fill="#2c8c34"/>
<rect x="1" y="871" width="91" height="3" fill="#86c088"/>
<rect x="1309" y="870" width="131" height="4" fill="#14a8ec"/>
<!-- IME bar -->
<rect x="1277.5" y="846.5" width="162" height="23.5" fill="#f6f9fd" stroke="#c9d6e6" stroke-width="1"/>
<g transform="translate(1269,856.3) rotate(-16)">
<rect x="-11.5" y="-11.5" width="23" height="23" rx="3" fill="#f4561a"/>
<path d="M7.5,-5.5 Q3,-7.8 -3,-6.8 Q-8.5,-5.5 -7.5,-1.8 Q-6.5,1 1,0.8 Q6.5,1 6.5,3.6 Q5.8,6.8 -1,6.8 Q-5,6.8 -8,5" fill="none" stroke="#ffffff" stroke-width="3.6"/>
</g>
<g fill="#2a74c8">
<rect x="1290" y="854" width="13" height="6.5" rx="1.2" fill="none" stroke="#2a74c8" stroke-width="2"/>
<rect x="1295.5" y="851" width="2" height="14"/>
<path d="M1322,852 Q1326,855 1324.8,860.5 Q1323,865 1317,865 Q1313.5,864.5 1312,862 Q1318,863 1321,859 Q1323,856 1322,852 Z"/>
<circle cx="1335" cy="856" r="1.5" fill="none" stroke="#2a74c8" stroke-width="1"/>
<path d="M1342.5,857.5 Q1345,859 1341,864" fill="none" stroke="#2a74c8" stroke-width="2.2"/><circle cx="1342.5" cy="858.3" r="1.5" fill="#2a74c8"/>
<rect x="1354" y="852" width="15.8" height="11.8" rx="1.8" fill="#2a74c8"/>
<g fill="#ffffff"><rect x="1356" y="854.2" width="2" height="1.7"/><rect x="1359" y="854.2" width="2" height="1.7"/><rect x="1362" y="854.2" width="2" height="1.7"/><rect x="1365" y="854.2" width="2" height="1.7"/><rect x="1356" y="857" width="2" height="1.7"/><rect x="1359" y="857" width="2" height="1.7"/><rect x="1362" y="857" width="2" height="1.7"/><rect x="1365" y="857" width="2" height="1.7"/><rect x="1356" y="859.8" width="2" height="1.7"/><rect x="1359" y="859.8" width="8" height="1.7"/></g>
<circle cx="1384" cy="853" r="2.8" fill="#b8c4d6"/>
<path d="M1378.5,862 Q1379,857 1384,857 Q1388,857 1389,860 L1389,865 L1380,865 Z" fill="#b8c4d6"/>
<text x="1385" y="866" font-family="Liberation Sans" font-weight="bold" font-size="7" fill="#ffffff" stroke="#c8d0dc" stroke-width="0.4">14</text>
<path d="M1398,853 L1402,850 L1409,850 L1413,853 L1411,857 L1409,856 L1409,865 L1402,865 L1402,856 L1400,857 Z"/>
<path d="M1421,863 L1429,855 Q1428,851 1431,849.5 Q1434,849 1435,850 L1432,852.5 L1433.5,854 L1436,851.5 Q1436.5,855 1434,856.5 Q1432,857 1431,856.5 L1423,864.5 Z"/>
</g>

</svg>
</body></html>
